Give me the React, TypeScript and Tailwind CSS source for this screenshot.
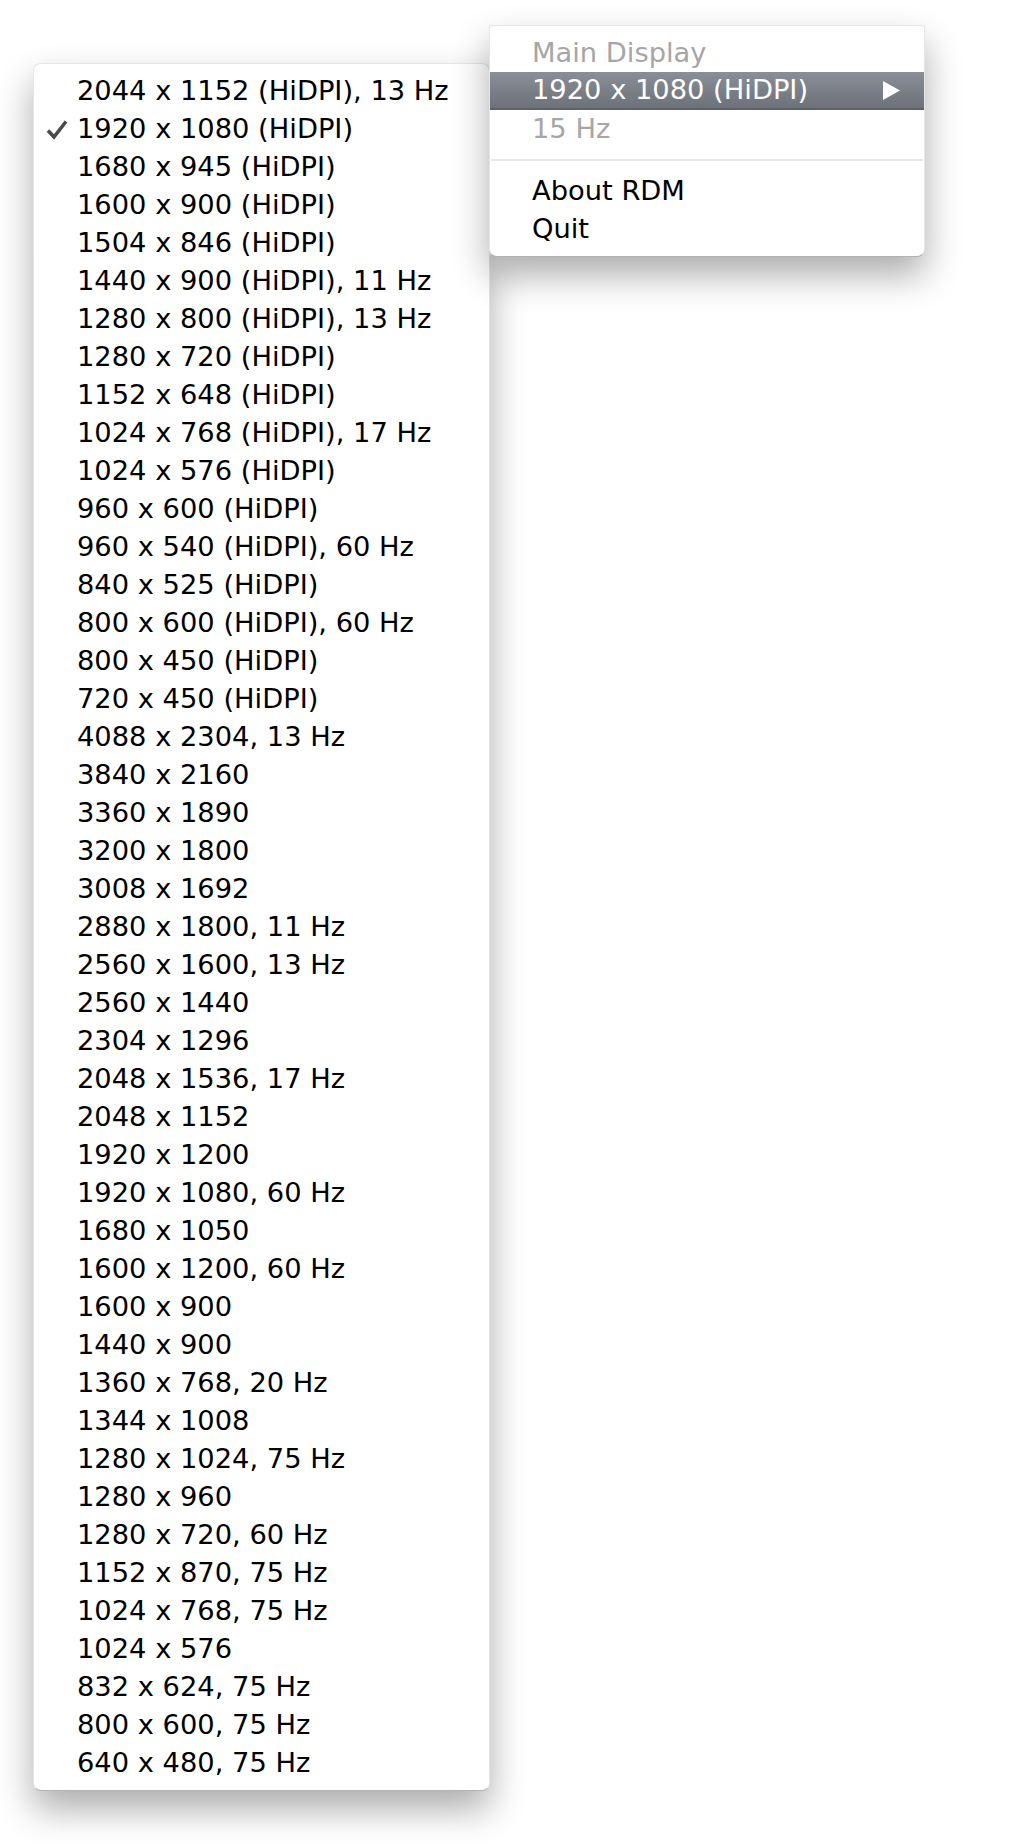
import React from "react";

const modes = [
  "2044 x 1152 (HiDPI), 13 Hz",
  "1920 x 1080 (HiDPI)",
  "1680 x 945 (HiDPI)",
  "1600 x 900 (HiDPI)",
  "1504 x 846 (HiDPI)",
  "1440 x 900 (HiDPI), 11 Hz",
  "1280 x 800 (HiDPI), 13 Hz",
  "1280 x 720 (HiDPI)",
  "1152 x 648 (HiDPI)",
  "1024 x 768 (HiDPI), 17 Hz",
  "1024 x 576 (HiDPI)",
  "960 x 600 (HiDPI)",
  "960 x 540 (HiDPI), 60 Hz",
  "840 x 525 (HiDPI)",
  "800 x 600 (HiDPI), 60 Hz",
  "800 x 450 (HiDPI)",
  "720 x 450 (HiDPI)",
  "4088 x 2304, 13 Hz",
  "3840 x 2160",
  "3360 x 1890",
  "3200 x 1800",
  "3008 x 1692",
  "2880 x 1800, 11 Hz",
  "2560 x 1600, 13 Hz",
  "2560 x 1440",
  "2304 x 1296",
  "2048 x 1536, 17 Hz",
  "2048 x 1152",
  "1920 x 1200",
  "1920 x 1080, 60 Hz",
  "1680 x 1050",
  "1600 x 1200, 60 Hz",
  "1600 x 900",
  "1440 x 900",
  "1360 x 768, 20 Hz",
  "1344 x 1008",
  "1280 x 1024, 75 Hz",
  "1280 x 960",
  "1280 x 720, 60 Hz",
  "1152 x 870, 75 Hz",
  "1024 x 768, 75 Hz",
  "1024 x 576",
  "832 x 624, 75 Hz",
  "800 x 600, 75 Hz",
  "640 x 480, 75 Hz",
];

const selected = "1920 x 1080 (HiDPI)";

function Check() {
  return (
    <svg width="22" height="22" viewBox="0 0 22 22" className="absolute left-[12px] top-[8px]">
      <path d="M2 12.5 L8 19 L20 3.5" fill="none" stroke="#4a4a4a" strokeWidth="3.6" strokeLinecap="butt" strokeLinejoin="miter" />
    </svg>
  );
}

function ResolutionMenu() {
  return (
    <div className="absolute left-[33px] top-[63px] w-[457px] rounded-[8px] border border-black/10 border-b-black/30 bg-white pt-[8px] pb-[8px] shadow-[0_18px_36px_rgba(0,0,0,0.33)]">
      {modes.map((m) => (
        <div key={m} className="relative h-[38px] pl-[43px] leading-[38px] text-black">
          {m === selected && <Check />}
          {m}
        </div>
      ))}
    </div>
  );
}

function StatusMenu() {
  return (
    <div className="absolute left-[489px] top-[25px] z-10 w-[436px] rounded-b-[8px] rounded-t-[3px] border border-black/10 border-b-black/30 bg-white pt-[8px] pb-[8px] shadow-[0_18px_36px_rgba(0,0,0,0.33)]">
      <div className="h-[38px] pl-[42px] leading-[38px] text-[#a6a6a6]">Main Display</div>
      <div className="flex h-[38px] items-center justify-between border-b-2 border-[#5c616a] bg-gradient-to-b from-[#8a8f97] to-[#6c717a] pl-[42px] pr-[24px] leading-[36px] text-white">
        <span>1920 x 1080 (HiDPI)</span>
        <svg width="17" height="19" viewBox="0 0 17 19">
          <path d="M0 0 L17 9.5 L0 19 Z" fill="#ffffff" />
        </svg>
      </div>
      <div className="h-[38px] pl-[42px] leading-[38px] text-[#a6a6a6]">15 Hz</div>
      <div className="flex h-[24px] items-center px-[1px]">
        <div className="h-[2px] w-full bg-[#e6e6e6]" />
      </div>
      <div className="h-[38px] pl-[42px] leading-[38px] text-black">About RDM</div>
      <div className="h-[38px] pl-[42px] leading-[38px] text-black">Quit</div>
    </div>
  );
}

export default function App() {
  return (
    <div
      className="relative h-[1844px] w-[1026px] overflow-hidden bg-white text-[27.3px]"
      style={{ fontFamily: '"DejaVu Sans", "Liberation Sans", sans-serif' }}
    >
      <ResolutionMenu />
      <StatusMenu />
    </div>
  );
}
